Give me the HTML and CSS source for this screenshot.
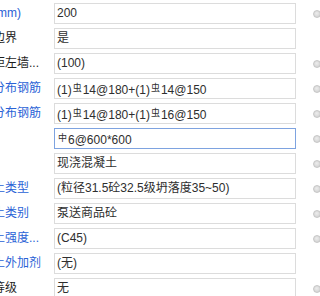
FILE: index.html
```html
<!DOCTYPE html>
<html lang="zh-CN">
<head>
<meta charset="utf-8">
<link rel="stylesheet" href="styles.css">
</head>
<body>
<div class="panel">
  <div class="row"><div class="label blue">板厚(mm)</div><div class="field">200</div><span class="dot"></span></div>
  <div class="row"><div class="label">是否边界</div><div class="field">是</div></div>
  <div class="row"><div class="label">洞口距左墙...</div><div class="field">(100)</div><span class="dot"></span></div>
  <div class="row"><div class="label blue">水平分布钢筋</div><div class="field">(1)<span class="rb">虫</span>14@180+(1)<span class="rb">虫</span>14@150</div><span class="dot"></span></div>
  <div class="row"><div class="label blue">竖向分布钢筋</div><div class="field">(1)<span class="rb">虫</span>14@180+(1)<span class="rb">虫</span>16@150</div><span class="dot"></span></div>
  <div class="row"><div class="label"></div><div class="field focus"><span class="rb">中</span>6@600*600</div><span class="dot"></span></div>
  <div class="row"><div class="label"></div><div class="field">现浇混凝土</div><span class="dot"></span></div>
  <div class="row"><div class="label blue">混凝土类型</div><div class="field">(粒径31.5砼32.5级坍落度35~50)</div><span class="dot"></span></div>
  <div class="row"><div class="label blue">混凝土类别</div><div class="field">泵送商品砼</div><span class="dot"></span></div>
  <div class="row"><div class="label blue">混凝土强度...</div><div class="field">(C45)</div><span class="dot"></span></div>
  <div class="row"><div class="label blue">混凝土外加剂</div><div class="field">(无)</div></div>
  <div class="row"><div class="label">抗渗等级</div><div class="field">无</div><span class="dot"></span></div>
</div>
</body>
</html>
```
FILE: styles.css
```css
html, body {
  margin: 0;
  background: #fff;
}
body {
  font-family: "Liberation Sans", "Noto Sans CJK SC", sans-serif;
  font-size: 12px;
  overflow: hidden;
  width: 320px;
  height: 296px;
}
.panel {
  display: flex;
  flex-direction: column;
  gap: 4px;
  padding-top: 3px;
  margin-left: -31px;
}
.row {
  display: flex;
  align-items: center;
  height: 21px;
}
.label {
  flex: none;
  width: 85px;
  white-space: nowrap;
  overflow: hidden;
  color: #1e1e1e;
  line-height: 21px;
}
.label.blue {
  color: #2a62d6;
}
.field {
  flex: none;
  box-sizing: border-box;
  width: 242px;
  height: 21px;
  border: 1px solid #dcdcdc;
  padding: 0 2px;
  line-height: 19px;
  color: #2e2e2e;
  white-space: nowrap;
  overflow: hidden;
  background: #fff;
}
.field.focus {
  border-color: #7ea3e0;
}
.rb {
  font-size: 9px;
  vertical-align: 3px;
  margin: 0 1px;
}
.dot {
  flex: none;
  box-sizing: border-box;
  width: 8px;
  height: 8px;
  margin-left: 17px;
  border-radius: 50%;
  border: 1px solid #c6c6c6;
  background: radial-gradient(circle at 45% 40%, #ececec 0%, #d6d6d6 70%, #cacaca 100%);
}
```
